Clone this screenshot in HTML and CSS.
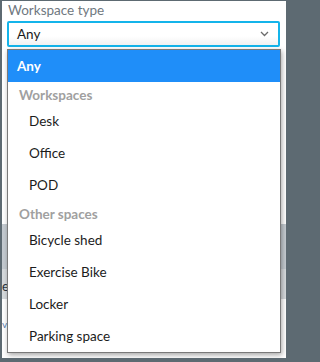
FILE: index.html
```html
<!DOCTYPE html>
<html>
<head>
<meta charset="utf-8">
<link rel="stylesheet" href="styles.css">
</head>
<body>
<div class="frame">
  <div class="page">
    <div class="label">Workspace type</div>
    <div class="select">
      <span class="value">Any</span>
      <svg class="chev" width="9" height="6" viewBox="0 0 9 6"><path d="M1 1 L4.5 4.5 L8 1" fill="none" stroke="#6b6b6b" stroke-width="1.3"/></svg>
    </div>
    <div class="backdrop">
      <div class="band-a"></div>
      <div class="band-b"><span class="peek">e</span></div>
      <div class="below"><span class="peek2">v</span></div>
    </div>
    <div class="menu">
      <div class="opt selected">Any</div>
      <div class="group">
        <div class="heading">Workspaces</div>
        <div class="opt">Desk</div>
        <div class="opt">Office</div>
        <div class="opt">POD</div>
      </div>
      <div class="group">
        <div class="heading">Other spaces</div>
        <div class="opt">Bicycle shed</div>
        <div class="opt">Exercise Bike</div>
        <div class="opt">Locker</div>
        <div class="opt">Parking space</div>
      </div>
    </div>
  </div>
</div>
</body>
</html>
```
FILE: styles.css
```css
html, body {
  margin: 0;
  padding: 0;
  background: #5d6a72;
}
body {
  font-family: "Lato", "Noto Sans", sans-serif;
  width: 289px;
  height: 362px;
  overflow: hidden;
}
.frame {
  box-sizing: border-box;
  width: 289px;
  height: 362px;
  border-style: solid;
  border-color: #5d6a72;
  border-width: 1px 3px 4px 2px;
}
.page {
  position: relative;
  background: #fff;
  height: 100%;
  overflow: hidden;
}
.label {
  padding-left: 6px;
  font-size: 13.5px;
  line-height: 19px;
  color: #6f7880;
  height: 20px;
}
.select {
  margin-left: 5px;
  width: 273px;
  height: 26px;
  box-sizing: border-box;
  border: 2px solid #14b4ea;
  border-radius: 2px;
  background: linear-gradient(#ffffff 60%, #f1f1f1);
  display: flex;
  align-items: center;
  justify-content: space-between;
  padding: 0 9px 0 8px;
}
.value {
  font-size: 13.5px;
  color: #1a1a1a;
}
.chev { display: block; }
.backdrop {
  margin-top: 177px;
}
.band-a {
  height: 45px;
  background: #c4cad0;
}
.band-b {
  height: 30px;
  background: #d6dadd;
  position: relative;
}
.peek {
  position: absolute;
  left: 0;
  top: 9px;
  font-size: 13px;
  color: #2a3440;
}
.below {
  position: relative;
  height: 40px;
}
.peek2 {
  position: absolute;
  left: 0;
  top: 19px;
  font-size: 10px;
  color: #5a7fb0;
}
.menu {
  position: absolute;
  left: 5px;
  top: 48px;
  width: 274px;
  box-sizing: border-box;
  border: 1px solid #7a7a7a;
  background: #fff;
  box-shadow: 1px 2px 5px rgba(0,0,0,0.35);
}
.opt {
  height: 32px;
  line-height: 32px;
  padding-left: 21px;
  font-size: 13.5px;
  color: #1c1c1c;
}
.opt.selected {
  background: #1f8ef9;
  color: #fff;
  font-weight: 700;
  padding-left: 9px;
}
.heading {
  height: 23px;
  box-sizing: border-box;
  padding: 4px 0 0 11px;
  line-height: 19px;
  font-size: 13.5px;
  font-weight: 700;
  color: #a0a0a0;
}
```
